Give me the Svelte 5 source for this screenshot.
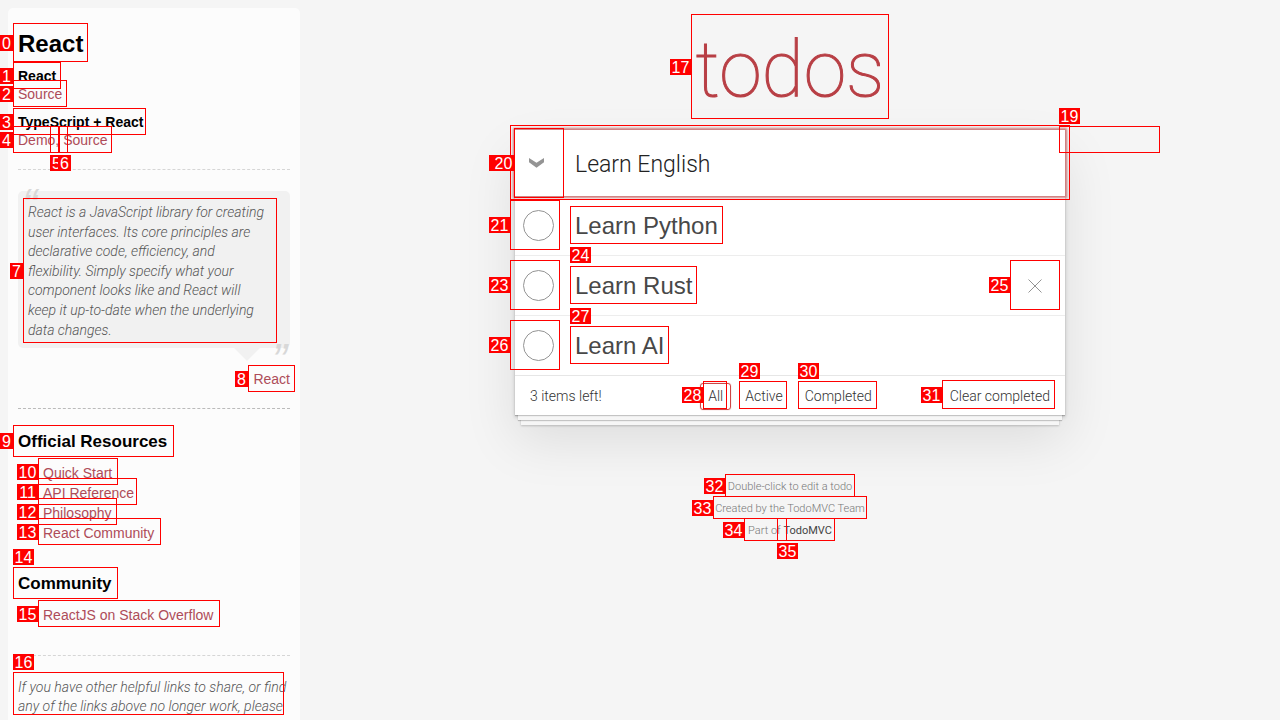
<script>
  const todos = [
    { title: 'Learn Python', active: false },
    { title: 'Learn Rust', active: true },
    { title: 'Learn AI', active: false }
  ];
  let draft = $state('Learn English');

  // Element markers: label, box left/top/right/bottom, label left/top
  const marks = [
    ['0', 13, 23, 88, 62, 0, 35],
    ['1', 13, 62, 61, 89, 0, 68],
    ['2', 13, 80, 67, 107, 0, 86],
    ['3', 13, 108, 146, 135, 0, 114],
    ['4', 13, 126, 59, 153, 0, 132],
    ['5', 50, 126, 68, 153, 50, 155],
    ['6', 59, 126, 112, 153, 58, 155],
    ['7', 23, 198, 277, 343, 10, 263],
    ['8', 248, 365, 295, 392, 235, 371],
    ['9', 13, 425, 174, 457, 0, 433],
    ['10', 38, 458, 118, 485, 17, 464],
    ['11', 38, 478, 137, 505, 17, 484],
    ['12', 38, 498, 117, 525, 17, 504],
    ['13', 38, 518, 161, 545, 17, 524],
    ['14', 13, 567, 118, 599, 13, 549],
    ['15', 38, 600, 220, 627, 17, 606],
    ['16', 13, 672, 284, 715, 13, 654],
    ['17', 691, 14, 889, 119, 670, 59],
    ['', 510, 125, 1070, 200, 489, 155],
    ['19', 1059, 126, 1160, 153, 1059, 108],
    ['20', 514, 128, 564, 198, 493, 155],
    ['21', 510, 200, 560, 250, 489, 217],
    [null, 570, 206, 723, 244, 0, 0],
    ['23', 510, 260, 560, 310, 489, 277],
    ['24', 570, 266, 697, 304, 570, 247],
    ['25', 1010, 260, 1060, 310, 989, 277],
    ['26', 510, 320, 560, 370, 489, 337],
    ['27', 570, 326, 669, 364, 570, 308],
    ['28', 703, 381, 727, 409, 682, 387],
    ['29', 739, 381, 787, 409, 739, 363],
    ['30', 798, 381, 877, 409, 798, 363],
    ['31', 942, 380, 1055, 409, 921, 387],
    ['32', 725, 474, 855, 497, 704, 478],
    ['33', 713, 496, 867, 519, 692, 500],
    ['34', 744, 518, 787, 541, 723, 522],
    ['35', 777, 518, 835, 541, 777, 543]
  ];
</script>

<div class="page">
  <aside class="learn">
    <h3>React</h3>
    <div class="example">
      <h5>React</h5>
      <a href="#source">Source</a>
    </div>
    <div class="example">
      <h5>TypeScript + React</h5>
      <a href="#demo">Demo</a>, <a href="#ts-source">Source</a>
    </div>
    <hr class="first" />
    <blockquote>
      <p>React is a JavaScript library for creating user interfaces. Its core principles are declarative code, efficiency, and flexibility. Simply specify what your component looks like and React will keep it up-to-date when the underlying data changes.</p>
    </blockquote>
    <div class="cite"><a href="#react">React</a></div>
    <hr class="second" />
    <h4>Official Resources</h4>
    <ul>
      <li><a href="#start">Quick Start</a></li>
      <li><a href="#api">API Reference</a></li>
      <li><a href="#philosophy">Philosophy</a></li>
      <li><a href="#community">React Community</a></li>
    </ul>
    <h4>Community</h4>
    <ul>
      <li><a href="#so">ReactJS on Stack Overflow</a></li>
    </ul>
    <hr class="third" />
    <p class="issues">If you have other helpful links to share, or find any of the links above no longer work, please</p>
  </aside>

  <main>
    <h1>todos</h1>
    <section class="card">
      <div class="entry">
        <button class="all" aria-label="Mark all as complete">
          <svg width="15" height="10" viewBox="0 0 15 10"><path d="M0 0 7.5 4.8 15 0V4.2L7.5 9.8 0 4.2Z" fill="#949494" /></svg>
        </button>
        <input class="new" type="text" aria-label="New todo" bind:value={draft} />
      </div>
      <ul class="list">
        {#each todos as todo, i}
          <li>
            <input class="toggle" type="checkbox" id={`todo-${i}`} />
            <label for={`todo-${i}`}>{todo.title}</label>
            {#if todo.active}
              <button class="destroy" aria-label="Delete">
                <svg width="14" height="14" viewBox="0 0 14 14"><path d="M.5.5l13 13M13.5.5l-13 13" stroke="#949494" fill="none" /></svg>
              </button>
            {/if}
          </li>
        {/each}
      </ul>
      <footer class="bar">
        <span class="count">3 items left!</span>
        <nav>
          <a class="selected" href="#all">All</a>
          <a href="#active">Active</a>
          <a href="#completed">Completed</a>
        </nav>
        <button class="clear">Clear completed</button>
      </footer>
    </section>
    <footer class="info">
      <p>Double-click to edit a todo</p>
      <p>Created by the TodoMVC Team</p>
      <p>Part of <a href="#todomvc">TodoMVC</a></p>
    </footer>
  </main>

  <div class="marks">
    {#each marks as [label, l, t, r, b]}
      <span class="box" style={`left:${l}px;top:${t}px;width:${r - l}px;height:${b - t}px`}></span>
    {/each}
    {#each marks as [label, l, t, r, b, x, y]}
      {#if label !== null}
        <span class="tag" class:wide={label.length !== 1} style={`left:${x}px;top:${y}px`}>{label}</span>
      {/if}
    {/each}
  </div>
</div>

<style>
  :global(body) { margin: 0; background: #f5f5f5; }
  .page {
    position: relative;
    display: grid;
    grid-template-columns: 300px 1fr;
    min-height: 100vh;
    font: 14px/18px "Liberation Sans", Arial, sans-serif;
    color: #111;
    overflow: hidden;
  }
  h1, h3, h4, h5, p, ul, blockquote { margin: 0; padding: 0; }
  ul { list-style: none; }
  a { color: #ae4c59; text-decoration: none; }
  button { margin: 0; padding: 0; border: 0; background: none; font: inherit; color: inherit; }

  .learn {
    box-sizing: border-box;
    margin: 8px 0 0 8px;
    padding: 20px 10px 0;
    background: #fcfcfc;
    border-radius: 5px 5px 0 0;
    color: #ae4c59;
  }
  h3, h4, h5 { color: #000; font-weight: 700; }
  h3 { font-size: 24px; line-height: 32px; margin-bottom: 7px; }
  h4 { font-size: 17px; line-height: 22px; }
  h5 { font-size: 14px; line-height: 18px; }
  .example { margin-bottom: 10px; }
  hr { margin: 0; border: 0; border-top: 1px dashed #d6d6d6; }
  .first { margin: 20px 0 21px; }
  .second { margin: 20px 0 22px; border-color: #bbb; }
  .third { margin: 28px 0 22px; }
  blockquote {
    position: relative;
    padding: 12px 23px 8px 10px;
    background: #f1f1f1;
    border-radius: 5px;
    color: #555;
    font: italic 300 14px/1.4 Roboto, sans-serif;
  }
  blockquote::after {
    content: "";
    position: absolute;
    right: 30px;
    bottom: -13px;
    border: 13px solid transparent;
    border-top-color: #f1f1f1;
    border-bottom: 0;
  }
  blockquote p::before, blockquote p::after { position: absolute; font: italic 46px/46px "Liberation Sans", sans-serif; color: #d8d8d8; }
  blockquote p::before { content: "“"; left: 4px; top: -9px; }
  blockquote p::after { content: "”"; right: 3px; bottom: -35px; }
  .cite { margin-top: 22px; text-align: right; }
  .learn li { padding-left: 25px; line-height: 20px; }
  .learn ul { margin: 10px 0 30px; }
  .learn .issues { margin-right: -5px; color: #555; font: italic 300 14px/19px Roboto, sans-serif; }

  main { display: flex; flex-direction: column; align-items: center; font-family: Roboto, sans-serif; font-weight: 300; }
  h1 { height: 130px; padding-top: 24px; box-sizing: border-box; font-size: 77px; line-height: 92px; font-weight: 100; color: #b83f45; -webkit-text-stroke: 1px #b83f45; }
  .card {
    width: 550px;
    max-width: 90%;
    background: #fff;
    box-shadow: 0 1px 1px rgba(0,0,0,.2), 0 8px 0 -3px #f6f6f6, 0 9px 1px -3px rgba(0,0,0,.2), 0 16px 0 -6px #f6f6f6, 0 17px 2px -6px rgba(0,0,0,.2), 0 2px 4px rgba(0,0,0,.2), 0 25px 50px rgba(0,0,0,.1);
  }
  .entry { display: flex; height: 66px; box-shadow: 0 0 2px 2px #cf7d7d; position: relative; background: #fff; }
  .all { width: 43px; display: grid; place-items: center; }
  .new { flex: 1; min-width: 0; border: 0; outline: 0; padding: 4px 16px 0 17px; background: none; font: 300 23px/34px Roboto, sans-serif; color: #222; }
  .list li { box-sizing: border-box; display: flex; align-items: center; height: 60px; padding: 0 15px 0 8px; border-bottom: 1px solid #ededed; }
  .list li:last-child { height: 59px; border: 0; }
  .toggle { appearance: none; box-sizing: border-box; width: 31px; height: 31px; margin: 0; border: 1px solid #949494; border-radius: 50%; }
  .list label { flex: 1; padding-left: 21px; font: 24px/30px "Liberation Sans", sans-serif; color: #484848; }
  .destroy { display: grid; place-items: center; width: 30px; height: 40px; }
  .bar { box-sizing: border-box; display: grid; grid-template-columns: 1fr auto 1fr; align-items: center; height: 40px; padding: 1px 15px 0; border-top: 1px solid #e6e6e6; font-size: 14px; line-height: 19px; color: #333; }
  .bar nav { display: flex; gap: 6px; }
  .bar nav a { color: inherit; padding: 3px 7px; border: 1px solid transparent; border-radius: 3px; }
  .bar nav .selected { border-color: #ce4646; box-shadow: 0 0 1px #cf7d7d; }
  .clear { justify-self: end; }
  .info { margin-top: 61px; font-size: 11px; line-height: 22px; color: #777; text-align: center; }
  .info a { color: #444; font-weight: 400; }

  .marks { position: absolute; inset: 0; pointer-events: none; }
  .box { position: absolute; box-sizing: border-box; border: 1px solid #f00; }
  .tag { position: absolute; width: 13px; height: 16px; background: #f00; color: #fff; font-size: 16px; line-height: 18px; text-align: center; }
  .wide { width: 21px; }
</style>
